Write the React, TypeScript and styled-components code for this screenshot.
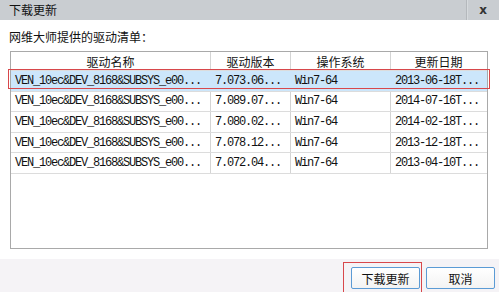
import React from "react";
import styled, { createGlobalStyle } from "styled-components";

const Global = createGlobalStyle`
  html, body { margin: 0; padding: 0; background: #ffffff; }
  body { width: 499px; height: 292px; overflow: hidden; }
`;

const CJK = `"Noto Sans CJK SC", "Noto Sans", sans-serif`;
const MONO = `"Liberation Mono", "DejaVu Sans Mono", monospace`;

const Dialog = styled.div`
  position: relative;
  width: 499px;
  height: 292px;
  display: flex;
  flex-direction: column;
  background: #ffffff;
  font-family: ${CJK};
  color: #111;
`;

const TitleBar = styled.div`
  height: 20px;
  flex: none;
  display: flex;
  align-items: center;
  background: #c9cdd1;
`;

const Title = styled.div`
  flex: 1;
  padding-left: 9px;
  font-size: 12px;
  line-height: 20px;
  color: #111;
`;

const CloseBox = styled.div`
  width: 32px;
  height: 20px;
  border-left: 1px solid #b4b8bc;
  box-shadow: inset 1px 0 0 #d6dadd;
  display: flex;
  align-items: center;
  justify-content: center;
  font-family: "DejaVu Sans", sans-serif;
  font-weight: bold;
  font-size: 12px;
  color: #333;
`;

const Body = styled.div`
  flex: 1;
  display: flex;
  flex-direction: column;
  padding: 9px 11px 10px 10px;
`;

const Label = styled.div`
  font-size: 12px;
  line-height: 16px;
  height: 16px;
  margin-left: -1px;
  margin-bottom: 6px;
`;

const TableWrap = styled.div`
  position: relative;
  width: 478px;
  height: 198px;
  box-sizing: border-box;
  border: 1px solid #a9a9a9;
  background: #fff;
`;

const Row = styled.div<{ $header?: boolean; $selected?: boolean }>`
  display: grid;
  grid-template-columns: 200px 80px 100px 96px;
  height: ${(p) => (p.$header ? "18px" : "19.6px")};
  border-bottom: 1px solid #dcdcdc;
  background: ${(p) => (p.$selected ? "#cce6fb" : "transparent")};
`;

const Cell = styled.div<{ $header?: boolean; $selected?: boolean; $last?: boolean }>`
  display: flex;
  align-items: center;
  justify-content: ${(p) => (p.$header ? "center" : "flex-start")};
  padding-left: ${(p) => (p.$header ? "0" : "4px")};
  border-right: ${(p) => (p.$last || p.$selected ? "1px solid transparent" : "1px solid #d4d4d4")};
  font-family: ${(p) => (p.$header ? CJK : MONO)};
  font-size: 12px;
  letter-spacing: ${(p) => (p.$header ? "0" : "-1.2px")};
  color: #111;
  white-space: nowrap;
  overflow: hidden;
`;

const RowMark = styled.div`
  position: absolute;
  left: -3px;
  top: 17px;
  width: 482px;
  height: 20px;
  border: 1px solid #d8474b;
  box-sizing: border-box;
  pointer-events: none;
`;

const Footer = styled.div`
  position: relative;
  height: 33px;
  flex: none;
  background: #f5f3f6;
  display: flex;
  justify-content: flex-end;
  align-items: flex-start;
  gap: 6px;
  padding: 8px 4px 0 0;
  box-sizing: border-box;
`;

const Button = styled.button`
  width: 69px;
  height: 22px;
  padding: 0;
  border: 1px solid #5b9bd5;
  border-radius: 2px;
  background: linear-gradient(#ffffff, #f3f3f3);
  font-family: ${CJK};
  font-size: 12px;
  color: #111;
`;

const ButtonMark = styled.div`
  position: absolute;
  left: 343px;
  top: 3px;
  width: 79px;
  height: 34px;
  border: 1px solid #d8474b;
  box-sizing: border-box;
  pointer-events: none;
`;

const headers = ["驱动名称", "驱动版本", "操作系统", "更新日期"];

const rows = [
  ["VEN_10ec&DEV_8168&SUBSYS_e00...", "7.073.06...", "Win7-64", "2013-06-18T..."],
  ["VEN_10ec&DEV_8168&SUBSYS_e00...", "7.089.07...", "Win7-64", "2014-07-16T..."],
  ["VEN_10ec&DEV_8168&SUBSYS_e00...", "7.080.02...", "Win7-64", "2014-02-18T..."],
  ["VEN_10ec&DEV_8168&SUBSYS_e00...", "7.078.12...", "Win7-64", "2013-12-18T..."],
  ["VEN_10ec&DEV_8168&SUBSYS_e00...", "7.072.04...", "Win7-64", "2013-04-10T..."],
];

export default function App() {
  return (
    <>
      <Global />
      <Dialog>
        <TitleBar>
          <Title>下载更新</Title>
          <CloseBox>x</CloseBox>
        </TitleBar>
        <Body>
          <Label>网维大师提供的驱动清单：</Label>
          <TableWrap>
            <Row $header>
              {headers.map((h, i) => (
                <Cell key={h} $header $last={i === headers.length - 1}>
                  {h}
                </Cell>
              ))}
            </Row>
            {rows.map((r, ri) => (
              <Row key={ri} $selected={ri === 0}>
                {r.map((c, ci) => (
                  <Cell key={ci} $selected={ri === 0} $last={ci === r.length - 1}>
                    {c}
                  </Cell>
                ))}
              </Row>
            ))}
            <RowMark />
          </TableWrap>
        </Body>
        <Footer>
          <Button>下载更新</Button>
          <Button>取消</Button>
          <ButtonMark />
        </Footer>
      </Dialog>
    </>
  );
}
